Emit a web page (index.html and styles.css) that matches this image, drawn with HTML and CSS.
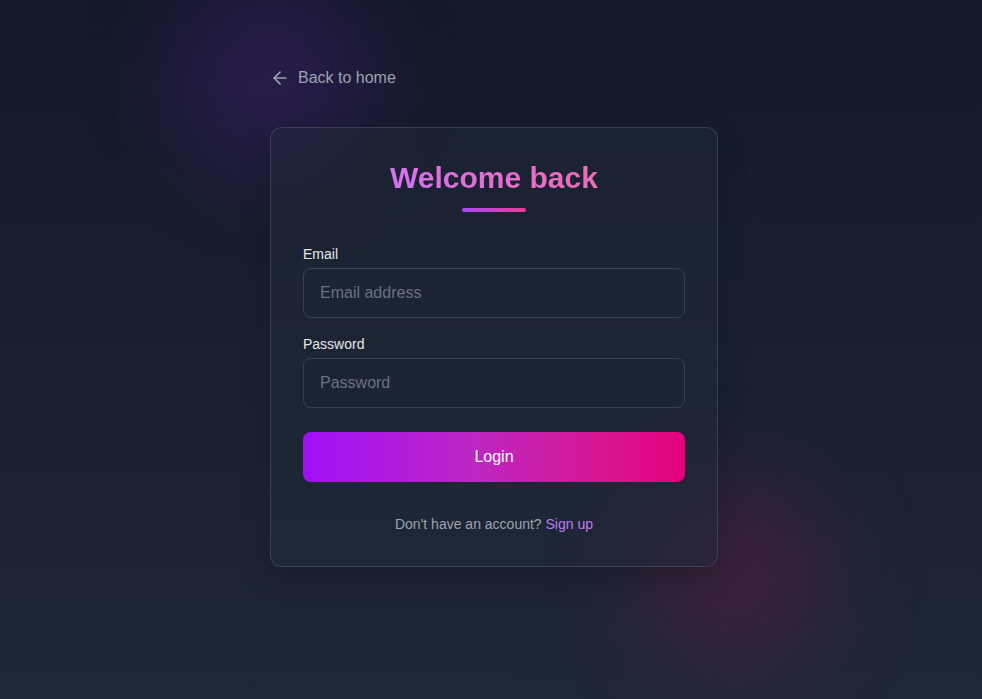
FILE: index.html
```html
<!DOCTYPE html>
<html lang="en">

<head>
  <meta charset="UTF-8" />
  <meta name="viewport" content="width=device-width, initial-scale=1.0" />
  <title>Login</title>
  <link rel="stylesheet" href="styles.css">
</head>

<body>
  <div class="glow glowPurple"></div>
  <div class="glow glowPink"></div>

  <main class="wrap">
    <a class="backLink" href="#">
      <svg width="20" height="20" viewBox="0 0 24 24" fill="none" stroke="currentColor" stroke-width="2" stroke-linecap="round" stroke-linejoin="round">
        <path d="M19 12H5" />
        <path d="M12 19l-7-7 7-7" />
      </svg>
      <span>Back to home</span>
    </a>

    <section class="card">
      <div class="cardHead">
        <h1 class="title">Welcome back</h1>
        <div class="bar"></div>
      </div>

      <form class="form">
        <div class="field">
          <label for="email">Email</label>
          <input id="email" type="email" placeholder="Email address" />
        </div>
        <div class="field">
          <label for="password">Password</label>
          <input id="password" type="password" placeholder="Password" />
        </div>
        <button type="button" class="loginBtn">Login</button>
      </form>

      <p class="signup">Don't have an account? <a href="#">Sign up</a></p>
    </section>
  </main>
</body>

</html>
```

FILE: styles.css
```css
* {
  margin: 0;
  padding: 0;
  box-sizing: border-box;
  font-family: "Liberation Sans", Arial, sans-serif;
}

html,
body {
  height: 100%;
}

body {
  position: relative;
  overflow: hidden;
  background: linear-gradient(to bottom, #131928, #1e2737);
}

/* glow blobs */
.glow {
  position: absolute;
  width: 200px;
  height: 200px;
  border-radius: 50%;
  filter: blur(45px);
  pointer-events: none;
}

.glowPurple {
  left: 170px;
  top: -25px;
  background: rgba(110, 30, 190, 0.22);
}

.glowPink {
  left: 635px;
  top: 475px;
  background: rgba(170, 20, 80, 0.2);
}

.wrap {
  position: relative;
  width: 448px;
  margin-left: 270px;
  padding-top: 66px;
}

.backLink {
  display: inline-flex;
  align-items: center;
  gap: 8px;
  color: #9ca3af;
  text-decoration: none;
  font-size: 16px;
  line-height: 24px;
}

.card {
  margin-top: 35px;
  padding: 32px;
  border: 1px solid rgba(75, 85, 99, 0.6);
  border-radius: 12px;
  background-color: rgba(31, 41, 55, 0.5);
  box-shadow: 0 10px 30px rgba(0, 0, 0, 0.2);
}

.cardHead {
  display: flex;
  flex-direction: column;
  align-items: center;
  margin-bottom: 32px;
}

.title {
  font-size: 30px;
  line-height: 36px;
  font-weight: 700;
  background: linear-gradient(90deg, #d870f2, #ee6cb6);
  -webkit-background-clip: text;
  background-clip: text;
  color: transparent;
}

.bar {
  width: 64px;
  height: 4px;
  margin-top: 12px;
  border-radius: 2px;
  background: linear-gradient(90deg, #a74bf8, #ee3d92);
}

.form {
  display: flex;
  flex-direction: column;
}

.field {
  display: flex;
  flex-direction: column;
  gap: 4px;
  margin-bottom: 16px;
}

.field:nth-child(2) {
  margin-bottom: 24px;
}

.field label {
  color: #e5e7eb;
  font-size: 14px;
  line-height: 20px;
}

.field input {
  height: 50px;
  padding: 0 16px;
  border: 1px solid #374151;
  border-radius: 8px;
  background-color: #1b2433;
  color: #e5e7eb;
  font-size: 16px;
  outline: none;
}

.field input::placeholder {
  color: #6b7280;
}

.loginBtn {
  height: 50px;
  border: none;
  border-radius: 8px;
  background: linear-gradient(90deg, #a20ff8, #bd27c3 45%, #d9148f 80%, #e4007c);
  color: #fff;
  font-size: 16px;
  font-weight: 500;
  cursor: pointer;
}

.signup {
  margin-top: 32px;
  text-align: center;
  color: #9ca3af;
  font-size: 14px;
  line-height: 20px;
}

.signup a {
  color: #c27af0;
  text-decoration: none;
}
```
